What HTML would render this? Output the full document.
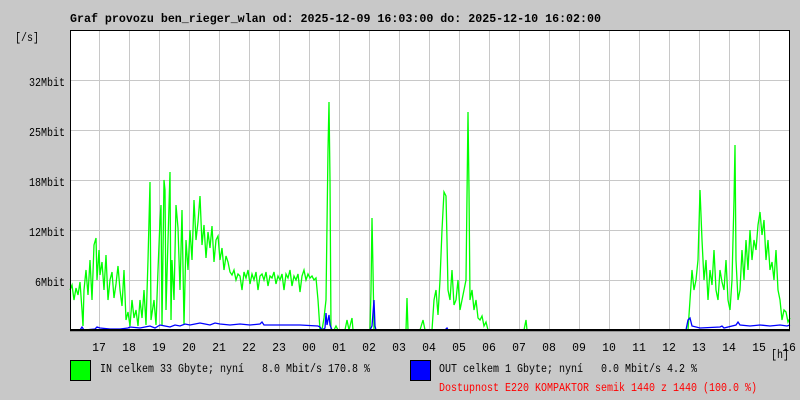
<!DOCTYPE html>
<html><head><meta charset="utf-8"><style>
body{margin:0;width:800px;height:400px;background:#c8c8c8;overflow:hidden}
svg{display:block}
text{font-family:"Liberation Mono",monospace;font-size:11.5px;fill:#000;white-space:pre}
</style></head><body>
<svg width="800" height="400" viewBox="0 0 800 400" xml:space="preserve">
<rect x="70" y="30" width="720" height="300" fill="#fff"/>
<g stroke="#c8c8c8" stroke-width="1" shape-rendering="crispEdges">
<path d="M99.5 30V330M129.5 30V330M159.5 30V330M189.5 30V330M219.5 30V330M249.5 30V330M279.5 30V330M309.5 30V330M339.5 30V330M369.5 30V330M399.5 30V330M429.5 30V330M459.5 30V330M489.5 30V330M519.5 30V330M549.5 30V330M579.5 30V330M609.5 30V330M639.5 30V330M669.5 30V330M699.5 30V330M729.5 30V330M759.5 30V330"/>
<path d="M70 80.5H790M70 130.5H790M70 180.5H790M70 230.5H790M70 280.5H790"/>
</g>
<polyline fill="none" stroke="#00ff00" stroke-width="1.3" points="70,290 72,285 74,300 76,288 78,295 80,282 82,310 83,326 84,290 86,270 88,295 90,260 92,300 94,245 96,238 97,280 99,250 100,275 102,262 104,290 106,255 108,300 110,280 112,272 114,298 116,284 118,266 120,290 122,306 124,270 126,320 128,312 130,326 132,300 134,318 136,310 138,326 140,300 142,318 144,290 146,325 148,260 150,182 151,320 154,300 156,325 158,270 160,220 161,205 162,325 164,180 165,190 166,310 168,240 170,172 171,320 172,260 174,300 176,205 178,228 180,290 182,210 184,325 186,240 188,270 190,230 192,260 194,200 196,240 198,222 200,196 202,245 204,225 206,258 208,232 210,248 212,226 214,262 216,240 218,236 220,260 222,248 224,270 226,256 228,262 230,272 232,275 234,270 236,280 238,274 240,276 242,290 244,272 246,278 248,270 250,284 252,274 254,280 256,272 258,290 260,276 262,274 264,280 266,272 268,286 270,276 272,278 274,272 276,284 278,276 280,280 282,274 284,290 286,274 288,278 290,270 292,286 294,276 296,280 298,274 300,292 302,276 304,270 306,280 308,274 310,278 312,276 314,280 316,278 318,300 320,330 322,330 324,318 326,300 328,150 329,102 330,180 331,330 334,330 336,326 338,330 345,330 347,320 349,330 352,318 353,330 370,330 371,290 372,218 373,270 374,330 406,330 407,298 408,330 420,330 423,320 425,330 432,330 434,300 436,290 438,315 440,280 442,230 444,192 446,196 447,240 448,290 450,300 452,270 454,305 456,300 458,280 460,310 462,300 464,290 466,280 468,112 469,190 470,300 472,290 474,310 476,300 478,318 480,320 482,316 484,326 486,322 488,330 524,330 526,320 527,330 688,330 690,300 692,270 694,290 696,280 698,260 700,190 702,240 704,280 706,260 708,300 710,270 712,285 714,250 716,290 718,300 720,270 722,282 724,290 726,260 728,300 730,310 732,280 734,200 735,145 736,260 738,300 740,290 742,250 744,280 746,240 748,270 750,230 752,260 754,240 756,250 758,225 760,212 762,235 764,220 766,260 768,240 770,270 772,262 774,280 776,250 778,290 780,300 782,320 784,310 786,312 788,322 790,318"/>
<polyline fill="none" stroke="#0000ff" stroke-width="1.3" points="70,330 80,330 82,327 84,330 95,329 97,327 100,328 110,329 120,329 128,328 130,327 140,328 145,327 150,326 155,328 160,325 165,326 170,327 175,325 180,326 185,324 190,325 200,323 205,324 210,325 215,323 220,324 230,325 240,324 250,325 260,324 262,322 264,325 280,325 300,325 318,326 320,327 322,330 325,328 326,313 327,325 329,315 330,325 332,330 370,330 372,326 374,300 375,326 376,330 445,330 447,328 448,330 686,330 688,320 690,318 692,326 700,328 720,327 722,326 724,328 736,325 738,322 740,325 750,326 760,325 770,326 780,325 787,326 790,325"/>
<rect x="70.5" y="30.5" width="719" height="299" fill="none" stroke="#000" stroke-width="1" shape-rendering="crispEdges"/>
<path d="M70 330.5H790" stroke="#000" stroke-width="1.5"/>
<text x="70" y="22" style="font-weight:bold" textLength="531" lengthAdjust="spacingAndGlyphs">Graf provozu ben_rieger_wlan od: 2025-12-09 16:03:00 do: 2025-12-10 16:02:00</text>
<text x="15" y="41" textLength="24" lengthAdjust="spacingAndGlyphs">[/s]</text>
<g text-anchor="end">
<text x="65" y="86" textLength="36" lengthAdjust="spacingAndGlyphs">32Mbit</text><text x="65" y="136" textLength="36" lengthAdjust="spacingAndGlyphs">25Mbit</text><text x="65" y="186" textLength="36" lengthAdjust="spacingAndGlyphs">18Mbit</text><text x="65" y="236" textLength="36" lengthAdjust="spacingAndGlyphs">12Mbit</text><text x="65" y="286" textLength="30" lengthAdjust="spacingAndGlyphs">6Mbit</text>
</g>
<g text-anchor="middle" style="font-size:11px">
<text x="99" y="351">17</text><text x="129" y="351">18</text><text x="159" y="351">19</text><text x="189" y="351">20</text><text x="219" y="351">21</text><text x="249" y="351">22</text><text x="279" y="351">23</text><text x="309" y="351">00</text><text x="339" y="351">01</text><text x="369" y="351">02</text><text x="399" y="351">03</text><text x="429" y="351">04</text><text x="459" y="351">05</text><text x="489" y="351">06</text><text x="519" y="351">07</text><text x="549" y="351">08</text><text x="579" y="351">09</text><text x="609" y="351">10</text><text x="639" y="351">11</text><text x="669" y="351">12</text><text x="699" y="351">13</text><text x="729" y="351">14</text><text x="759" y="351">15</text><text x="789" y="351">16</text>
</g>
<text x="771" y="358" textLength="18" lengthAdjust="spacingAndGlyphs">[h]</text>
<rect x="70.5" y="360.5" width="20" height="20" fill="#00ff00" stroke="#000"/>
<text x="100" y="372" textLength="270" lengthAdjust="spacingAndGlyphs">IN celkem 33 Gbyte; nyní   8.0 Mbit/s 170.8 %</text>
<rect x="410.5" y="360.5" width="20" height="20" fill="#0000ff" stroke="#000"/>
<text x="439" y="372" textLength="258" lengthAdjust="spacingAndGlyphs">OUT celkem 1 Gbyte; nyní   0.0 Mbit/s 4.2 %</text>
<text x="439" y="391" style="fill:#ff0000" textLength="318" lengthAdjust="spacingAndGlyphs">Dostupnost E220 KOMPAKTOR semik 1440 z 1440 (100.0 %)</text>
</svg>
</body></html>
